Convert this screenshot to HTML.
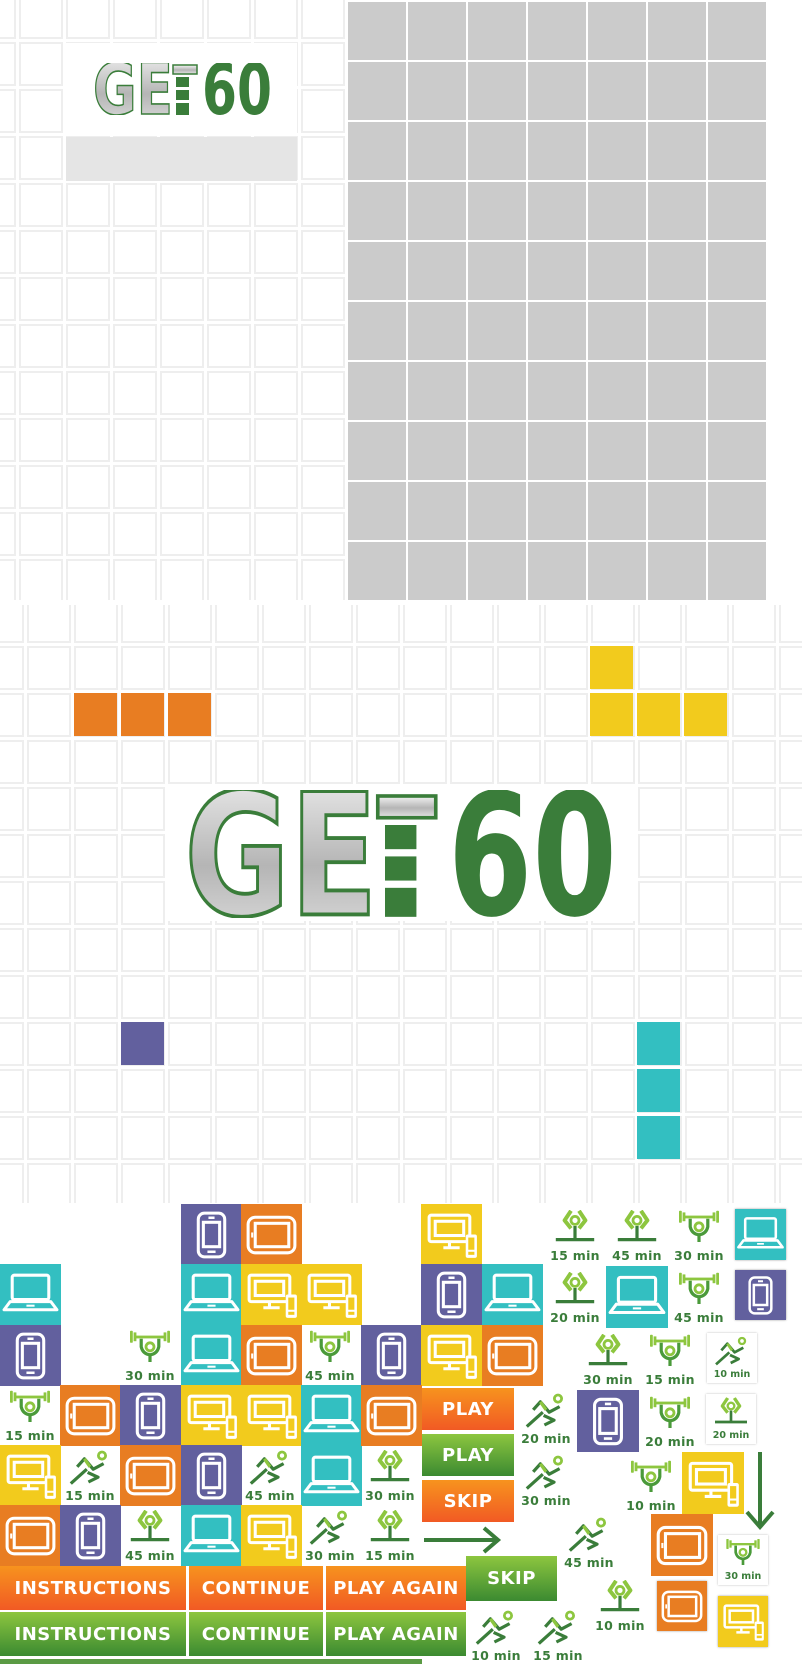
<!DOCTYPE html>
<html><head><meta charset="utf-8"><style>
*{margin:0;padding:0;box-sizing:border-box}
body{width:802px;height:1664px;position:relative;background:#fff;overflow:hidden;font-family:"Liberation Sans",sans-serif}
.a{position:absolute}
.t{position:absolute;width:61px;height:61px}
.t svg{width:100%;height:100%;display:block}
.P{background:#62609e}.O{background:#e87d22}.Y{background:#f2cb1d}.T{background:#33bfc1}
.f{position:absolute;width:48px;height:52px}
.f svg{width:50px;height:40px;display:block;margin:0 -1px}
.f span{position:absolute;left:-8px;right:-8px;bottom:-1px;text-align:center;font-family:"DejaVu Sans",sans-serif;font-weight:bold;font-size:12.5px;color:#3a7d3a;letter-spacing:.3px}
.m{position:absolute;width:50px;height:50px;background:#fff;box-shadow:0 0 2px #bbb}
.m svg{width:40px;height:34px;display:block;margin:3px auto 0}
.m span{position:absolute;left:0;right:0;bottom:3px;text-align:center;font-family:"DejaVu Sans",sans-serif;font-weight:bold;font-size:9.5px;color:#3a7d3a}
.b{position:absolute;color:#fff;font-family:"DejaVu Sans",sans-serif;font-weight:bold;font-size:18px;letter-spacing:.5px;text-align:center;display:flex;align-items:center;justify-content:center}
.bo{background:linear-gradient(#f7931e,#f15a24)}
.bg{background:linear-gradient(#8dc63f,#3b8a31)}
</style></head><body>
<svg width="0" height="0" style="position:absolute">
<defs>
<symbol id="ph" viewBox="0 0 60 60"><g fill="none" stroke="#fff" stroke-width="3"><rect x="17" y="9" width="26" height="43" rx="6"/><rect x="22" y="18" width="16" height="24"/></g><g stroke="#fff" stroke-width="2.5"><path d="M27 13.5H33M26 47H34"/></g></symbol>
<symbol id="tb" viewBox="0 0 60 60"><g fill="none" stroke="#fff" stroke-width="3"><rect x="7" y="13" width="46" height="35" rx="7"/><rect x="14" y="19" width="33" height="23"/></g><rect x="10" y="28" width="2" height="5" fill="#fff"/></symbol>
<symbol id="lp" viewBox="0 0 60 60"><g fill="none" stroke="#fff" stroke-width="3"><rect x="12" y="11" width="36" height="24" rx="2"/><path d="M10 37 L4 45 H56 L50 37Z" stroke-linejoin="round"/></g><path d="M26 41H34" stroke="#fff" stroke-width="2"/></symbol>
<symbol id="dt" viewBox="0 0 60 60"><g fill="none" stroke="#fff" stroke-width="3"><rect x="8" y="11" width="40" height="26" rx="2"/><rect x="14" y="17" width="28" height="14"/><path d="M22 43H38M28 37V43"/></g><rect x="44" y="30" width="11" height="23" rx="2" fill="#fff"/><rect x="46.5" y="33" width="6" height="12" fill="#f2cb1d"/><rect x="46.5" y="47" width="6" height="3" fill="#f2cb1d"/></symbol>
<symbol id="wt" viewBox="0 0 60 50"><g fill="#8dc63f"><rect x="12" y="7" width="36" height="3.5"/><rect x="5" y="1" width="3.5" height="15" rx="1"/><rect x="9.5" y="3" width="3.5" height="11"/><rect x="47" y="3" width="3.5" height="11"/><rect x="51.5" y="1" width="3.5" height="15" rx="1"/></g><g fill="none" stroke="#4a9a3a" stroke-width="4"><path d="M19 11 L19 21 Q21 30 30 31 Q39 30 41 21 L41 11"/><path d="M30 30 V40"/></g><circle cx="30" cy="21" r="5" fill="none" stroke="#8dc63f" stroke-width="3.5"/></symbol>
<symbol id="yg" viewBox="0 0 60 50"><g fill="none" stroke="#8dc63f" stroke-width="5" stroke-linejoin="round"><path d="M25 1 L17 13 L25 23 M35 1 L43 13 L35 23"/></g><circle cx="30" cy="13" r="5" fill="none" stroke="#8dc63f" stroke-width="3.5"/><g stroke="#3a7d3a" stroke-width="4"><path d="M30 20 V38M6 37 H54"/></g></symbol>
<symbol id="rn" viewBox="0 0 60 50"><circle cx="45" cy="7" r="4.5" fill="none" stroke="#8dc63f" stroke-width="3.5"/><g fill="none" stroke="#3a7d3a" stroke-width="4" stroke-linejoin="round"><path d="M6 42 L26 24"/><path d="M14 21 L23 11 L34 24 L47 17"/><path d="M27 28 L40 34 L28 40"/></g><path d="M23 11 L30 21" stroke="#8dc63f" stroke-width="4"/></symbol>
<linearGradient id="lg" x1="0" y1="0" x2="0" y2="1"><stop offset="0" stop-color="#f4f4f4"/><stop offset=".55" stop-color="#b5b5b5"/><stop offset="1" stop-color="#e4e4e4"/></linearGradient>
<symbol id="logo" viewBox="0 0 180 52"><text x="1" y="51" font-family="DejaVu Sans" font-weight="bold" font-size="70" fill="url(#lg)" stroke="#3a7d3a" stroke-width="1.6" textLength="80" lengthAdjust="spacingAndGlyphs">GE</text><rect x="81" y="2" width="24" height="9" fill="url(#lg)" stroke="#3a7d3a" stroke-width="1.5"/><rect x="84" y="14" width="13" height="10" fill="#3a7d3a"/><rect x="84" y="27" width="13" height="10" fill="#3a7d3a"/><rect x="84" y="40" width="13" height="12" fill="#3a7d3a"/><text x="110" y="51" font-family="DejaVu Sans" font-weight="bold" font-size="70" fill="#3a7d3a" textLength="70" lengthAdjust="spacingAndGlyphs">60</text></symbol>
<pattern id="g1" x="19" y="-5" width="47" height="47" patternUnits="userSpaceOnUse"><rect x="1" y="1" width="42" height="42" fill="#fff" stroke="#eeeeee" stroke-width="2"/></pattern>
<pattern id="g2" x="-20" y="599" width="47" height="47" patternUnits="userSpaceOnUse"><rect x="1" y="1" width="42" height="42" fill="#fff" stroke="#eeeeee" stroke-width="2"/></pattern>
<pattern id="g3" x="348" y="2" width="60" height="60" patternUnits="userSpaceOnUse"><rect x="0" y="0" width="58" height="58" fill="#cbcbcb"/></pattern>
</defs></svg>

<svg class="a" style="left:0;top:0" width="802" height="1210">
<rect x="0" y="0" width="345" height="600" fill="url(#g1)"/>
<rect x="348" y="2" width="420" height="598" fill="url(#g3)"/>
<rect x="66" y="43" width="231" height="90" fill="#fff"/>
<rect x="66" y="137" width="231" height="44" fill="#e5e5e5"/>
<rect x="0" y="605" width="802" height="598" fill="url(#g2)"/>
<rect x="168" y="787" width="468" height="134" fill="#fff"/>
<rect x="74" y="693" width="43" height="43" fill="#e87d22"/><rect x="121" y="693" width="43" height="43" fill="#e87d22"/><rect x="168" y="693" width="43" height="43" fill="#e87d22"/>
<rect x="590" y="646" width="43" height="43" fill="#f2cb1d"/><rect x="590" y="693" width="43" height="43" fill="#f2cb1d"/><rect x="637" y="693" width="43" height="43" fill="#f2cb1d"/><rect x="684" y="693" width="43" height="43" fill="#f2cb1d"/>
<rect x="121" y="1022" width="43" height="43" fill="#62609e"/>
<rect x="637" y="1022" width="43" height="43" fill="#33bfc1"/><rect x="637" y="1069" width="43" height="43" fill="#33bfc1"/><rect x="637" y="1116" width="43" height="43" fill="#33bfc1"/>
<rect x="0" y="1203" width="802" height="10" fill="#fff"/>
<use href="#logo" x="92" y="63" width="180" height="52"/>
<use href="#logo" x="182" y="790" width="435" height="128"/>
</svg>

<div class="t P" style="left:181px;top:1204px"><svg><use href="#ph"/></svg></div>
<div class="t O" style="left:241px;top:1204px"><svg><use href="#tb"/></svg></div>
<div class="t Y" style="left:421px;top:1204px"><svg><use href="#dt"/></svg></div>

<div class="t T" style="left:0;top:1264px"><svg><use href="#lp"/></svg></div>
<div class="t T" style="left:181px;top:1264px"><svg><use href="#lp"/></svg></div>
<div class="t Y" style="left:241px;top:1264px"><svg><use href="#dt"/></svg></div>
<div class="t Y" style="left:301px;top:1264px"><svg><use href="#dt"/></svg></div>
<div class="t P" style="left:421px;top:1264px"><svg><use href="#ph"/></svg></div>
<div class="t T" style="left:482px;top:1264px"><svg><use href="#lp"/></svg></div>

<div class="t P" style="left:0;top:1325px"><svg><use href="#ph"/></svg></div>
<div class="f" style="left:126px;top:1330px"><svg viewBox="0 0 60 50"><use href="#wt"/></svg><span>30 min</span></div>
<div class="t T" style="left:181px;top:1325px"><svg><use href="#lp"/></svg></div>
<div class="t O" style="left:241px;top:1325px"><svg><use href="#tb"/></svg></div>
<div class="f" style="left:306px;top:1330px"><svg viewBox="0 0 60 50"><use href="#wt"/></svg><span>45 min</span></div>
<div class="t P" style="left:361px;top:1325px"><svg><use href="#ph"/></svg></div>
<div class="t Y" style="left:421px;top:1325px"><svg><use href="#dt"/></svg></div>
<div class="t O" style="left:482px;top:1325px"><svg><use href="#tb"/></svg></div>

<div class="f" style="left:6px;top:1390px"><svg viewBox="0 0 60 50"><use href="#wt"/></svg><span>15 min</span></div>
<div class="t O" style="left:60px;top:1385px"><svg><use href="#tb"/></svg></div>
<div class="t P" style="left:120px;top:1385px"><svg><use href="#ph"/></svg></div>
<div class="t Y" style="left:181px;top:1385px"><svg><use href="#dt"/></svg></div>
<div class="t Y" style="left:241px;top:1385px"><svg><use href="#dt"/></svg></div>
<div class="t T" style="left:301px;top:1385px;height:121px"><svg style="height:61px"><use href="#lp"/></svg><svg style="height:61px"><use href="#lp"/></svg></div>
<div class="t O" style="left:361px;top:1385px"><svg><use href="#tb"/></svg></div>

<div class="t Y" style="left:0;top:1445px"><svg><use href="#dt"/></svg></div>
<div class="f" style="left:66px;top:1450px"><svg viewBox="0 0 60 50"><use href="#rn"/></svg><span>15 min</span></div>
<div class="t O" style="left:120px;top:1445px"><svg><use href="#tb"/></svg></div>
<div class="t P" style="left:181px;top:1445px"><svg><use href="#ph"/></svg></div>
<div class="f" style="left:246px;top:1450px"><svg viewBox="0 0 60 50"><use href="#rn"/></svg><span>45 min</span></div>
<div class="f" style="left:366px;top:1450px"><svg viewBox="0 0 60 50"><use href="#yg"/></svg><span>30 min</span></div>

<div class="t O" style="left:0;top:1505px"><svg><use href="#tb"/></svg></div>
<div class="t P" style="left:60px;top:1505px"><svg><use href="#ph"/></svg></div>
<div class="f" style="left:126px;top:1510px"><svg viewBox="0 0 60 50"><use href="#yg"/></svg><span>45 min</span></div>
<div class="t T" style="left:181px;top:1505px"><svg><use href="#lp"/></svg></div>
<div class="t Y" style="left:241px;top:1505px"><svg><use href="#dt"/></svg></div>
<div class="f" style="left:306px;top:1510px"><svg viewBox="0 0 60 50"><use href="#rn"/></svg><span>30 min</span></div>
<div class="f" style="left:366px;top:1510px"><svg viewBox="0 0 60 50"><use href="#yg"/></svg><span>15 min</span></div>

<div class="b bo" style="left:422px;top:1388px;width:92px;height:42px">PLAY</div>
<div class="b bg" style="left:422px;top:1434px;width:92px;height:42px">PLAY</div>
<div class="b bo" style="left:422px;top:1480px;width:92px;height:42px">SKIP</div>
<svg class="a" style="left:422px;top:1525px" width="80" height="30"><path d="M2 15H74M62 3L76 15L62 27" fill="none" stroke="#3a7d3a" stroke-width="4"/></svg>
<div class="b bg" style="left:466px;top:1556px;width:91px;height:45px">SKIP</div>
<div class="b bo" style="left:0;top:1566px;width:186px;height:44px">INSTRUCTIONS</div>
<div class="b bo" style="left:189px;top:1566px;width:134px;height:44px">CONTINUE</div>
<div class="b bo" style="left:326px;top:1566px;width:140px;height:44px">PLAY AGAIN</div>
<div class="b bg" style="left:0;top:1612px;width:186px;height:44px">INSTRUCTIONS</div>
<div class="b bg" style="left:189px;top:1612px;width:134px;height:44px">CONTINUE</div>
<div class="b bg" style="left:326px;top:1612px;width:140px;height:44px">PLAY AGAIN</div>
<div class="a" style="left:0;top:1659px;width:422px;height:5px;background:#5a9a44"></div>

<div class="f" style="left:551px;top:1210px"><svg viewBox="0 0 60 50"><use href="#yg"/></svg><span>15 min</span></div>
<div class="f" style="left:613px;top:1210px"><svg viewBox="0 0 60 50"><use href="#yg"/></svg><span>45 min</span></div>
<div class="f" style="left:675px;top:1210px"><svg viewBox="0 0 60 50"><use href="#wt"/></svg><span>30 min</span></div>
<div class="t T" style="left:735px;top:1209px;width:51px;height:51px;box-shadow:0 0 2px #999"><svg><use href="#lp"/></svg></div>
<div class="f" style="left:551px;top:1272px"><svg viewBox="0 0 60 50"><use href="#yg"/></svg><span>20 min</span></div>
<div class="t T" style="left:606px;top:1266px;width:62px;height:62px"><svg><use href="#lp"/></svg></div>
<div class="f" style="left:675px;top:1272px"><svg viewBox="0 0 60 50"><use href="#wt"/></svg><span>45 min</span></div>
<div class="t P" style="left:735px;top:1270px;width:51px;height:50px;box-shadow:0 0 2px #999"><svg><use href="#ph"/></svg></div>
<div class="f" style="left:584px;top:1334px"><svg viewBox="0 0 60 50"><use href="#yg"/></svg><span>30 min</span></div>
<div class="f" style="left:646px;top:1334px"><svg viewBox="0 0 60 50"><use href="#wt"/></svg><span>15 min</span></div>
<div class="m" style="left:707px;top:1333px"><svg viewBox="0 0 60 50"><use href="#rn"/></svg><span>10 min</span></div>
<div class="f" style="left:522px;top:1393px"><svg viewBox="0 0 60 50"><use href="#rn"/></svg><span>20 min</span></div>
<div class="t P" style="left:577px;top:1390px;width:62px;height:62px"><svg><use href="#ph"/></svg></div>
<div class="f" style="left:646px;top:1396px"><svg viewBox="0 0 60 50"><use href="#wt"/></svg><span>20 min</span></div>
<div class="m" style="left:706px;top:1394px"><svg viewBox="0 0 60 50"><use href="#yg"/></svg><span>20 min</span></div>
<div class="f" style="left:522px;top:1455px"><svg viewBox="0 0 60 50"><use href="#rn"/></svg><span>30 min</span></div>
<div class="f" style="left:627px;top:1460px"><svg viewBox="0 0 60 50"><use href="#wt"/></svg><span>10 min</span></div>
<div class="t Y" style="left:682px;top:1452px;width:62px;height:62px"><svg><use href="#dt"/></svg></div>
<svg class="a" style="left:744px;top:1450px" width="32" height="82"><path d="M16 2V76M3 62L16 77L29 62" fill="none" stroke="#3a7d3a" stroke-width="4"/></svg>
<div class="f" style="left:565px;top:1517px"><svg viewBox="0 0 60 50"><use href="#rn"/></svg><span>45 min</span></div>
<div class="t O" style="left:651px;top:1514px;width:62px;height:62px"><svg><use href="#tb"/></svg></div>
<div class="m" style="left:718px;top:1535px"><svg viewBox="0 0 60 50"><use href="#wt"/></svg><span>30 min</span></div>
<div class="f" style="left:596px;top:1580px"><svg viewBox="0 0 60 50"><use href="#yg"/></svg><span>10 min</span></div>
<div class="t O" style="left:657px;top:1581px;width:50px;height:50px;box-shadow:0 0 2px #999"><svg><use href="#tb"/></svg></div>
<div class="t Y" style="left:718px;top:1596px;width:50px;height:51px;box-shadow:0 0 2px #999"><svg><use href="#dt"/></svg></div>
<div class="f" style="left:472px;top:1610px"><svg viewBox="0 0 60 50"><use href="#rn"/></svg><span>10 min</span></div>
<div class="f" style="left:534px;top:1610px"><svg viewBox="0 0 60 50"><use href="#rn"/></svg><span>15 min</span></div>
</body></html>
